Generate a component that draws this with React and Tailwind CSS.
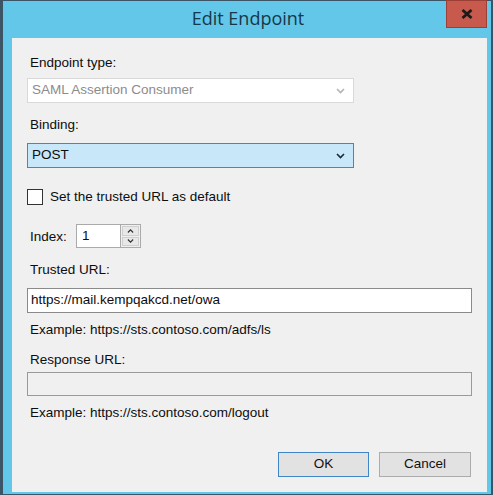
import React from 'react'

function Chevron({ color = '#000', className = '' }) {
  return (
    <svg width="9" height="6" viewBox="0 0 9 6" className={className}>
      <path d="M1 1l3.5 3.5L8 1" fill="none" stroke={color} strokeWidth="1.6" />
    </svg>
  )
}

function Label({ children, className = '' }) {
  return <div className={`h-4 leading-4 pl-[3px] ${className}`}>{children}</div>
}

export default function App() {
  return (
    <div
      className="w-[493px] h-[495px] flex flex-col bg-[#62c7e8] border-[#3b5566] border-l-[3px] border-r-2 border-t border-b text-[13.5px] text-[#0d0d0d]"
      style={{ fontFamily: '"Liberation Sans", Arial, sans-serif' }}
    >
      {/* title bar */}
      <div className="relative h-[37px] shrink-0 flex items-center justify-center">
        <span
          className="text-[18px] text-[#17384a] -mt-[3px] pl-[2px]"
          style={{ fontFamily: '"Open Sans", "Noto Sans", sans-serif' }}
        >
          Edit Endpoint
        </span>
        <div className="absolute -top-px right-[4px] w-[41px] h-[28px] bg-[#c85a4d] border border-[#9c3f36] flex items-center justify-center">
          <svg width="12" height="10" viewBox="0 0 12 10">
            <path d="M1.5 1l9 8M10.5 1l-9 8" stroke="#1b1b1b" strokeWidth="2.8" />
          </svg>
        </div>
      </div>

      {/* body */}
      <div className="ml-[9px] mr-[4px] h-[454px] bg-[#f0f0f0] pl-[15px] pr-[16px] flex flex-col">
        <Label className="mt-[17px]">Endpoint type:</Label>
        <div className="mt-[7px] w-[327px] h-[25px] bg-white border border-[#d9d9d9] flex items-center justify-between pl-[4px] pr-[8px] text-[#8c8c8c]">
          <span>SAML Assertion Consumer</span>
          <Chevron color="#b4b4b4" />
        </div>

        <Label className="mt-[14px]">Binding:</Label>
        <div className="mt-[10px] w-[327px] h-[25px] bg-[#c8e7f8] border border-[#3d8bc4] flex items-center justify-between pl-[4px] pr-[8px]">
          <span>POST</span>
          <Chevron color="#1c2a38" />
        </div>

        <div className="mt-[21px] h-4 flex items-center gap-[7px]">
          <div className="w-4 h-4 bg-white border border-[#333]" />
          <span>Set the trusted URL as default</span>
        </div>

        <div className="mt-[19px] h-[24px] flex items-center">
          <span className="pl-[3px] w-[49px] mt-[3px]">Index:</span>
          <div className="h-[24px] w-[44px] bg-white border border-[#aaa] border-r-0 flex items-center pl-[5px]">
            1
          </div>
          <div className="h-[24px] w-[21px] bg-[#f0f0f0] border border-[#aaa] flex flex-col p-px gap-px">
            <div className="flex-1 bg-[#e8e8e8] border border-[#cfcfcf] flex items-center justify-center">
              <Chevron color="#333" className="rotate-180 scale-75" />
            </div>
            <div className="flex-1 bg-[#e8e8e8] border border-[#cfcfcf] flex items-center justify-center">
              <Chevron color="#333" className="scale-75" />
            </div>
          </div>
        </div>

        <Label className="mt-[14px]">Trusted URL:</Label>
        <div className="mt-[10px] w-[445px] h-[25px] bg-white border border-[#8a8a8a] flex items-center pl-[3px]">
          https://mail.kempqakcd.net/owa
        </div>
        <Label className="mt-[9px]">Example: https://sts.contoso.com/adfs/ls</Label>

        <Label className="mt-[14px]">Response URL:</Label>
        <div className="mt-[4px] w-[445px] h-[24px] bg-[#f0f0f0] border border-[#9a9a9a]" />
        <Label className="mt-[9px]">Example: https://sts.contoso.com/logout</Label>

        <div className="mt-[31px] flex justify-end gap-[10px]">
          <button className="w-[91px] h-[25px] bg-[#e2e2e2] border border-[#3f86c6] text-[#111]">OK</button>
          <button className="w-[92px] h-[25px] bg-[#e2e2e2] border border-[#acacac] text-[#111]">Cancel</button>
        </div>
      </div>
    </div>
  )
}
